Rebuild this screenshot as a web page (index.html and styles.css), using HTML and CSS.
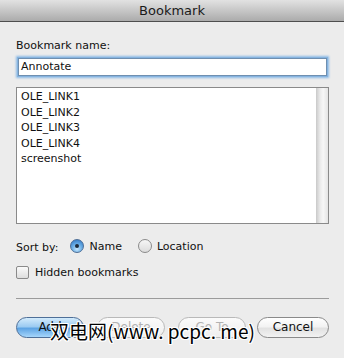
FILE: index.html
```html
<!DOCTYPE html>
<html>
<head>
<meta charset="utf-8">
<link rel="stylesheet" href="styles.css">
</head>
<body>
<div class="dialog">
  <div class="titlebar">Bookmark</div>
  <div class="content">
    <div class="label">Bookmark name:</div>
    <div class="input">Annotate</div>
    <div class="list">
      <ul class="items">
        <li>OLE_LINK1</li>
        <li>OLE_LINK2</li>
        <li>OLE_LINK3</li>
        <li>OLE_LINK4</li>
        <li>screenshot</li>
      </ul>
      <div class="scrollbar"></div>
    </div>
    <div class="sortrow">
      <span class="sortlabel">Sort by:</span>
      <span class="radio on"><span class="dot"></span></span><span class="rlabel">Name</span>
      <span class="radio"></span><span class="rlabel">Location</span>
    </div>
    <div class="checkrow">
      <span class="check"></span><span class="clabel">Hidden bookmarks</span>
    </div>
    <div class="sep"></div>
    <div class="buttons">
      <span class="btn primary b-add">Add</span>
      <span class="btn disabled b-del">Delete</span>
      <span class="btn disabled b-go">Go To</span>
      <span class="btn b-cancel">Cancel</span>
      <span class="watermark">双电网(www. pcpc. me)</span>
    </div>
  </div>
</div>
</body>
</html>
```

FILE: styles.css
```css
html, body {
  margin: 0;
  padding: 0;
  background: #ececec;
}
.dialog {
  width: 344px;
  height: 358px;
  background: #ececec;
  font-family: "DejaVu Sans", "Noto Sans CJK SC", sans-serif;
  color: #111;
  overflow: hidden;
}
.titlebar {
  height: 21px;
  border-bottom: 1px solid #4e4e4e;
  background: linear-gradient(#e2e2e2, #ababab);
  text-align: center;
  font-size: 13px;
  line-height: 22px;
  color: #1a1a1a;
}
.content {
  padding: 0 15px 0 16px;
  display: flex;
  flex-direction: column;
}
.label {
  font-size: 11px;
  line-height: 14px;
  margin-top: 17px;
}
.input {
  margin: 5px 2px 0 2px;
  height: 16px;
  border: 1px solid #6f8fb0;
  background: #fff;
  font-size: 11px;
  line-height: 16px;
  padding-left: 2px;
  box-shadow: 0 0 0 1px #86b4e0, 0 0 2px 2px #8dbbe6;
}
.list {
  margin-top: 11px;
  height: 135px;
  border: 1px solid #8a8a8a;
  background: #fff;
  display: flex;
}
.items {
  list-style: none;
  margin: 0;
  padding: 1px 0 0 4px;
  flex: 1;
  font-size: 11px;
  line-height: 15.5px;
}
.scrollbar {
  width: 12px;
  background: linear-gradient(90deg, #c9c9c9, #ebebeb 35%, #f7f7f7 60%, #e4e4e4);
}
.sortrow {
  display: flex;
  align-items: center;
  height: 16px;
  margin-top: 14px;
  font-size: 11px;
}
.sortlabel {
  margin-top: 3px;
  margin-right: 12px;
}
.radio {
  width: 12px;
  height: 12px;
  border-radius: 50%;
  border: 1px solid #8a8a8a;
  background: linear-gradient(#f6f6f6, #dcdcdc);
  display: flex;
  align-items: center;
  justify-content: center;
  margin-right: 5px;
}
.radio.on {
  border-color: #4c6e97;
  background: radial-gradient(circle at 50% 75%, #c6e6fb, #6aaee6 45%, #3f85cd 80%);
}
.dot {
  width: 4px;
  height: 4px;
  border-radius: 50%;
  background: #1d2a3a;
}
.rlabel {
  margin-right: 16px;
}
.checkrow {
  display: flex;
  align-items: center;
  height: 14px;
  margin-top: 11px;
  font-size: 11px;
}
.check {
  width: 11px;
  height: 11px;
  border: 1px solid #8a8a8a;
  border-radius: 2px;
  background: linear-gradient(#fafafa, #dedede);
  margin-right: 6px;
}
.sep {
  margin-top: 19px;
  height: 1px;
  background: #9b9b9b;
}
.buttons {
  position: relative;
  display: flex;
  margin-top: 18px;
  height: 21px;
}
.btn {
  box-sizing: border-box;
  height: 21px;
  width: 68px;
  border-radius: 11px;
  border: 1px solid #8a8a8a;
  background: linear-gradient(#ffffff, #f3f3f3 45%, #e2e2e2 55%, #f2f2f2);
  font-size: 12px;
  line-height: 19px;
  text-align: center;
  color: #111;
}
.primary {
  border-color: #4e6f98;
  background: linear-gradient(#d3ebfc, #9ccbf2 45%, #5ea4e4 55%, #a6d6fb);
}
.disabled {
  border-color: #b9b9b9;
  color: #b2b2b2;
  background: linear-gradient(#fbfbfb, #eeeeee);
}
.b-del { margin-left: 13px; }
.b-go { margin-left: 13px; }
.b-cancel { margin-left: auto; width: 72px; }
.watermark {
  position: absolute;
  left: 34px;
  top: 3px;
  font-size: 19px;
  line-height: 22px;
  color: #000;
  font-family: "Noto Sans CJK SC", "DejaVu Sans", sans-serif;
  text-shadow: 1px 0 0 #fff, -1px 0 0 #fff, 0 1px 0 #fff, 0 -1px 0 #fff, 1px 1px 0 #fff, -1px -1px 0 #fff, 1px -1px 0 #fff, -1px 1px 0 #fff;
  white-space: nowrap;
}
```
